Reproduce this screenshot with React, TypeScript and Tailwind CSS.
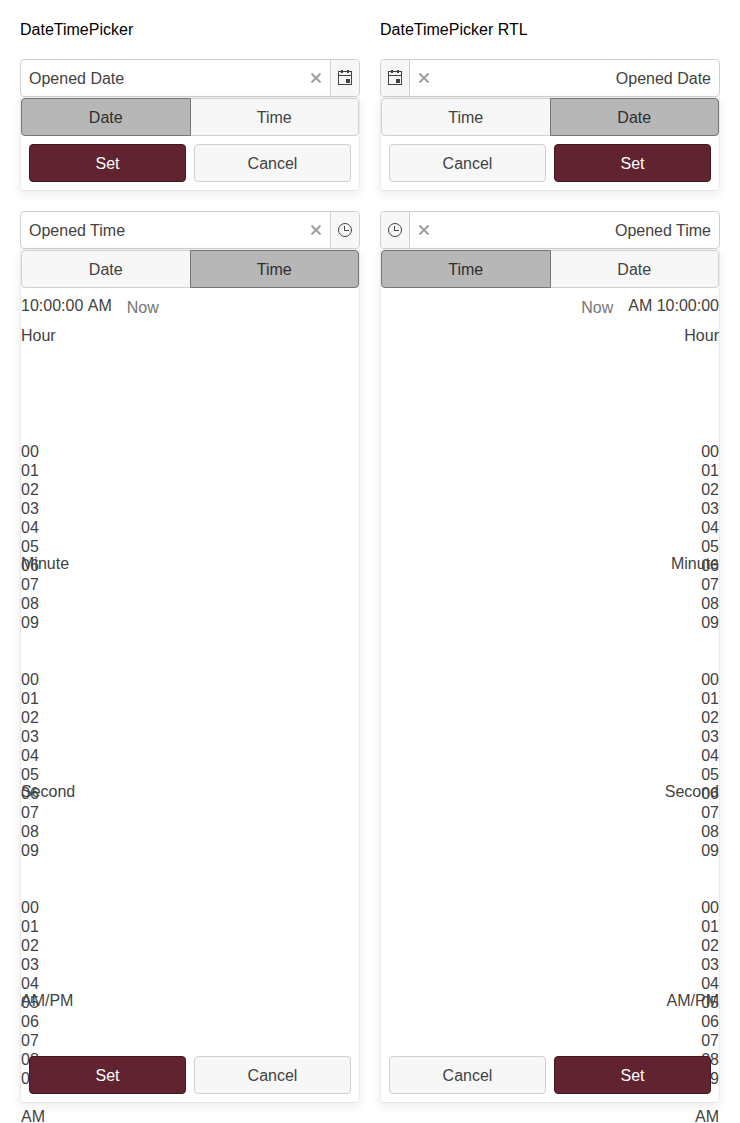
import React from "react";

const digits = ["00", "01", "02", "03", "04", "05", "06", "07", "08", "09"];

function CalendarIcon() {
  return (
    <svg width="16" height="16" viewBox="0 0 16 16" fill="none" stroke="#424242" shapeRendering="crispEdges">
      <path d="M1.5 1.5h13v13h-13zM1 5.5h14" />
      <path d="M4 0h2v3H4zM10 0h2v3h-2zM9 9h4v4H9z" fill="#424242" stroke="none" />
    </svg>
  );
}

function ClockIcon() {
  return (
    <svg width="16" height="16" viewBox="0 0 16 16" fill="none" stroke="#424242">
      <circle cx="8" cy="8" r="6.5" />
      <path d="M7.5 4v4.5H12" />
    </svg>
  );
}

function Input({ label, icon }: { label: string; icon: React.ReactNode }) {
  return (
    <div className="flex h-[38px] overflow-hidden rounded border border-[#d0d0d0] bg-white">
      <span className="flex-1 px-2 pt-2 leading-[22px]">{label}</span>
      <span className="flex w-7 items-center justify-center">
        <svg width="16" height="16" viewBox="0 0 16 16" fill="none" stroke="#a0a0a0" strokeWidth="2">
          <path d="M3.5 3.5l9 9M12.5 3.5l-9 9" />
        </svg>
      </span>
      <span className="flex w-[29px] items-center justify-center border-s border-[#d0d0d0] bg-[#f7f7f7]">{icon}</span>
    </div>
  );
}

function Tabs({ active }: { active: "Date" | "Time" }) {
  const on = "relative z-10 border-[#757575] bg-[#b7b7b7] text-[#2e2e2e]";
  const off = "border-[#d0d0d0] bg-[#f7f7f7]";
  return (
    <div className="flex h-[38px]">
      <button className={"-me-px w-[169.5px] rounded-s border pt-[2px] " + (active === "Date" ? on : off)}>Date</button>
      <button className={"w-[169.5px] rounded-e border pt-[2px] " + (active === "Time" ? on : off)}>Time</button>
    </div>
  );
}

function Footer() {
  return (
    <div className="relative z-10 mt-auto flex gap-2 p-2">
      <button className="h-[38px] flex-1 rounded border border-[#451521] bg-[#60232f] pt-[2px] text-white">Set</button>
      <button className="h-[38px] flex-1 rounded border border-[#d0d0d0] bg-[#f7f7f7] pt-[2px]">Cancel</button>
    </div>
  );
}

function Popup({ className, children }: { className: string; children: React.ReactNode }) {
  return (
    <div
      className={
        "flex flex-col rounded-b border border-[#0000000a] bg-white bg-clip-padding shadow-[0_3px_10px_rgba(0,0,0,0.08)] " +
        className
      }
    >
      {children}
    </div>
  );
}

function Spinner({ label, values, className }: { label: string; values: string[]; className: string }) {
  return (
    <section className={"shrink-0 " + className}>
      <div className="leading-[19px]">{label}</div>
      <ul className="pt-[97px]">
        {values.map((v) => (
          <li key={v} className="h-[19px] leading-[19px]">
            {v}
          </li>
        ))}
      </ul>
    </section>
  );
}

function TimeBody() {
  return (
    <div className="h-[760px]">
      <div className="flex h-[38px] items-start">
        <span className="mt-2 leading-[19px] [font-kerning:none]">10:00:00 AM</span>
        <span className="ms-[15px] mt-[10px] leading-[19px] text-[#757575]">Now</span>
      </div>
      <Spinner label="Hour" values={digits} className="h-[228px]" />
      <Spinner label="Minute" values={digits} className="h-[228px]" />
      <Spinner label="Second" values={digits} className="h-[209px]" />
      <Spinner label="AM/PM" values={["AM"]} className="h-0" />
    </div>
  );
}

function Column({ title, dir }: { title: string; dir: "ltr" | "rtl" }) {
  return (
    <div className="w-[340px]">
      <h1 className="mb-5 h-[19px] leading-[19px] text-black">{title}</h1>
      <div dir={dir}>
        <Input label="Opened Date" icon={<CalendarIcon />} />
        <Popup className="h-[94px]">
          <Tabs active="Date" />
          <Footer />
        </Popup>
        <div className="mt-5">
          <Input label="Opened Time" icon={<ClockIcon />} />
          <Popup className="h-[854px]">
            <Tabs active="Time" />
            <TimeBody />
            <Footer />
          </Popup>
        </div>
      </div>
    </div>
  );
}

export default function App() {
  return (
    <main className="flex h-[1123px] w-[740px] gap-5 overflow-hidden bg-white px-5 pt-5 font-['Liberation_Sans',Arial,sans-serif] text-base text-[#424242]">
      <Column title="DateTimePicker" dir="ltr" />
      <Column title="DateTimePicker RTL" dir="rtl" />
    </main>
  );
}
